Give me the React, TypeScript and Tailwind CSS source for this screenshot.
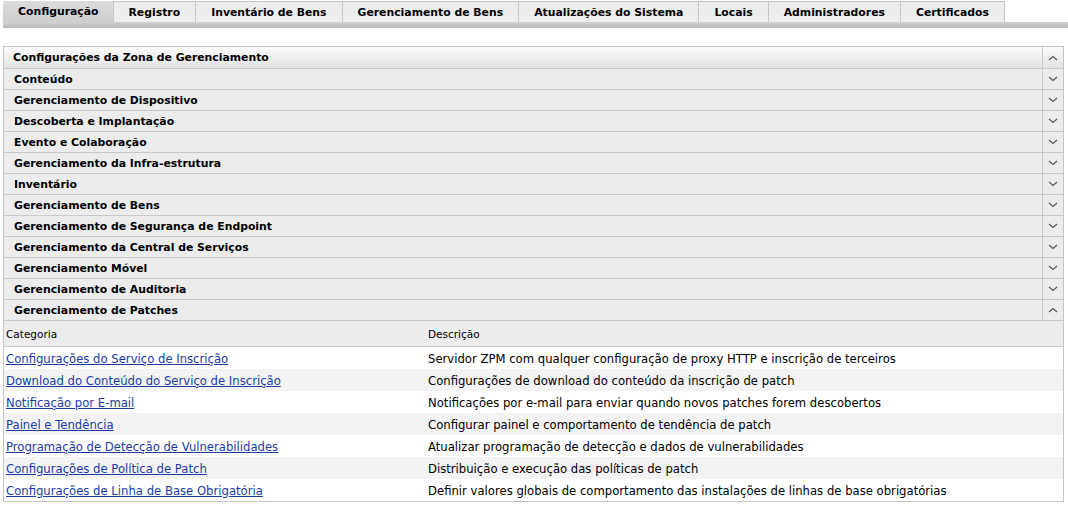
import React from "react";

const tabs = [
  "Configuração",
  "Registro",
  "Inventário de Bens",
  "Gerenciamento de Bens",
  "Atualizações do Sistema",
  "Locais",
  "Administradores",
  "Certificados",
];

const sections = [
  "Conteúdo",
  "Gerenciamento de Dispositivo",
  "Descoberta e Implantação",
  "Evento e Colaboração",
  "Gerenciamento da Infra-estrutura",
  "Inventário",
  "Gerenciamento de Bens",
  "Gerenciamento de Segurança de Endpoint",
  "Gerenciamento da Central de Serviços",
  "Gerenciamento Móvel",
  "Gerenciamento de Auditoria",
];

const rows = [
  ["Configurações do Serviço de Inscrição", "Servidor ZPM com qualquer configuração de proxy HTTP e inscrição de terceiros"],
  ["Download do Conteúdo do Serviço de Inscrição", "Configurações de download do conteúdo da inscrição de patch"],
  ["Notificação por E-mail", "Notificações por e-mail para enviar quando novos patches forem descobertos"],
  ["Painel e Tendência", "Configurar painel e comportamento de tendência de patch"],
  ["Programação de Detecção de Vulnerabilidades", "Atualizar programação de detecção e dados de vulnerabilidades"],
  ["Configurações de Política de Patch", "Distribuição e execução das políticas de patch"],
  ["Configurações de Linha de Base Obrigatória", "Definir valores globais de comportamento das instalações de linhas de base obrigatórias"],
];

function Chevron({ up }: { up?: boolean }) {
  return (
    <svg width="10" height="6" viewBox="0 0 10 6" className="block">
      <path
        d={up ? "M1 5 L5 1.5 L9 5" : "M1 1 L5 4.5 L9 1"}
        fill="none"
        stroke="#5a5a5a"
        strokeWidth="1.3"
      />
    </svg>
  );
}

function SectionRow({ label, up, header }: { label: string; up?: boolean; header?: boolean }) {
  return (
    <div
      className={
        header
          ? "flex h-[22px] border-b border-[#c9c9c9] bg-gradient-to-b from-[#fbfbfb] to-[#e3e3e3]"
          : "flex h-[21px] border-b border-[#c9c9c9] bg-[#ececec]"
      }
    >
      <div
        className={
          header
            ? "flex flex-1 items-center pl-[9px] pt-px text-[10.85px] font-bold"
            : "flex flex-1 items-center pl-[10px] pt-px text-[10.85px] font-bold"
        }
      >
        {label}
      </div>
      <div className="flex w-[21px] items-center justify-center border-l border-[#c9c9c9]">
        <Chevron up={up} />
      </div>
    </div>
  );
}

export default function App() {
  return (
    <div className="h-[506px] w-[1068px] bg-white text-[11.65px] leading-[14px] text-black [font-family:'DejaVu_Sans',sans-serif]">
      {/* Tabs */}
      <div className="pl-[3px] pt-[1px]">
        <div className="flex h-[21px]">
          {tabs.map((t, i) => (
            <div
              key={t}
              className={
                i === 0
                  ? "flex items-center bg-gradient-to-b from-[#dcdcdc] to-[#cdcdcd] px-[15px] pt-px text-[10.85px] font-bold"
                  : "-ml-px flex items-center border-l border-r border-t border-[#c6c6c6] bg-[#ededed] px-[15px] pt-px text-[10.85px] font-bold"
              }
            >
              {t}
            </div>
          ))}
        </div>
        <div className="h-[6px] bg-gradient-to-b from-[#d2d2d2] to-[#b9b9b9]" />
      </div>

      {/* Panel */}
      <div className="ml-[3px] mr-[4px] mt-[18px] border border-[#c4c4c4]">
        <SectionRow label="Configurações da Zona de Gerenciamento" up header />
        {sections.map((s) => (
          <SectionRow key={s} label={s} />
        ))}
        <SectionRow label="Gerenciamento de Patches" up />

        {/* Table */}
        <div className="flex h-[26px] items-center border-b border-[#c9c9c9] bg-[#ececec] pt-px text-[10.5px]">
          <div className="w-[424px] pl-[2px]">Categoria</div>
          <div>Descrição</div>
        </div>
        {rows.map(([a, b], i) => (
          <div
            key={a}
            className={
              i % 2 === 0
                ? "flex h-[22px] items-center bg-white pt-px"
                : "flex h-[22px] items-center bg-[#f3f3f3] pt-px"
            }
          >
            <div className="w-[424px] pl-[2px]">
              <a href="#" className="text-[#1d3aa6] underline">
                {a}
              </a>
            </div>
            <div>{b}</div>
          </div>
        ))}
      </div>
    </div>
  );
}
